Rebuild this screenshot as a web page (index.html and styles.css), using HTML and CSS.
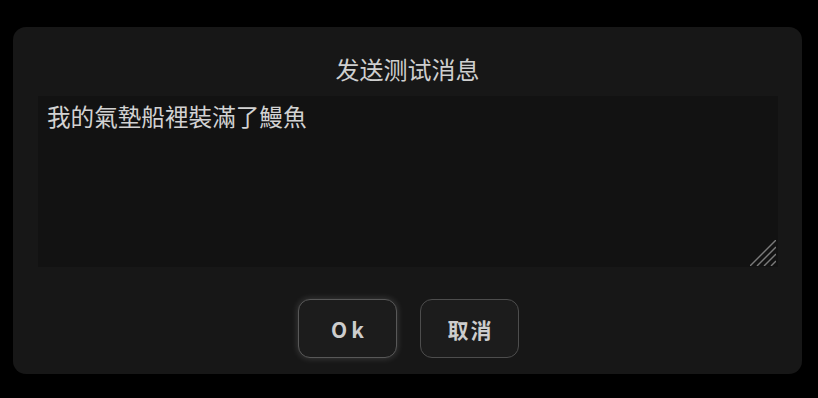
FILE: index.html
```html
<!DOCTYPE html>
<html lang="zh">
<head>
<meta charset="utf-8">
<link rel="stylesheet" href="styles.css">
</head>
<body>
<div class="dialog">
  <div class="title">发送测试消息</div>
  <div class="field">
    <textarea class="input">我的氣墊船裡裝滿了鰻魚</textarea>
    <svg class="grip" width="26" height="26" viewBox="0 0 26 26">
      <g stroke="#7a7a7a" stroke-width="1.4">
        <line x1="26" y1="0" x2="0" y2="26"/>
        <line x1="26" y1="7" x2="7" y2="26"/>
        <line x1="26" y1="14" x2="14" y2="26"/>
        <line x1="26" y1="21" x2="21" y2="26"/>
      </g>
    </svg>
  </div>
  <div class="actions">
    <button class="btn btn-focus btn-latin">Ok</button>
    <button class="btn">取消</button>
  </div>
</div>
</body>
</html>
```
FILE: styles.css
```css
html, body {
  margin: 0;
  padding: 0;
  background: #000;
}
body {
  width: 818px;
  height: 398px;
  font-family: "Noto Sans CJK SC", "Noto Sans", sans-serif;
  padding-top: 27px;
  box-sizing: border-box;
}
.dialog {
  margin-left: 13px;
  width: 789px;
  height: 347px;
  box-sizing: border-box;
  background: #171717;
  border-radius: 13px;
  padding: 24px 25px 16px;
  display: flex;
  flex-direction: column;
}
.title {
  color: #cfcfcf;
  font-size: 24px;
  line-height: 36px;
  text-align: center;
  margin-bottom: 9px;
}
.field {
  position: relative;
  height: 171px;
}
.input {
  display: block;
  width: 740px;
  height: 171px;
  box-sizing: border-box;
  background: #121212;
  border: none;
  outline: none;
  resize: none;
  margin: 0;
  padding: 2px 9px;
  color: #d2d2d2;
  font-family: "Noto Sans CJK TC", "Noto Sans CJK SC", sans-serif;
  font-size: 23.6px;
  line-height: 36px;
}
.grip {
  position: absolute;
  right: 1px;
  bottom: 1px;
}
.actions {
  margin-top: 32px;
  display: flex;
  justify-content: center;
  gap: 23px;
  padding-left: 2px;
}
.btn {
  width: 99px;
  height: 59px;
  box-sizing: border-box;
  background: #1c1c1c;
  border: 1px solid #4d4d4d;
  border-radius: 12px;
  color: #cdcdcd;
  font-family: "Noto Sans CJK SC", "Noto Sans", sans-serif;
  font-weight: 700;
  font-size: 21px;
  letter-spacing: 2px;
  padding: 0 0 0 2px;
}
.btn-latin {
  letter-spacing: 4px;
  padding: 0 0 0 4px;
}
.btn-focus {
  border-color: #585858;
  box-shadow: 0 0 7px rgba(255, 255, 255, 0.18);
}
```
